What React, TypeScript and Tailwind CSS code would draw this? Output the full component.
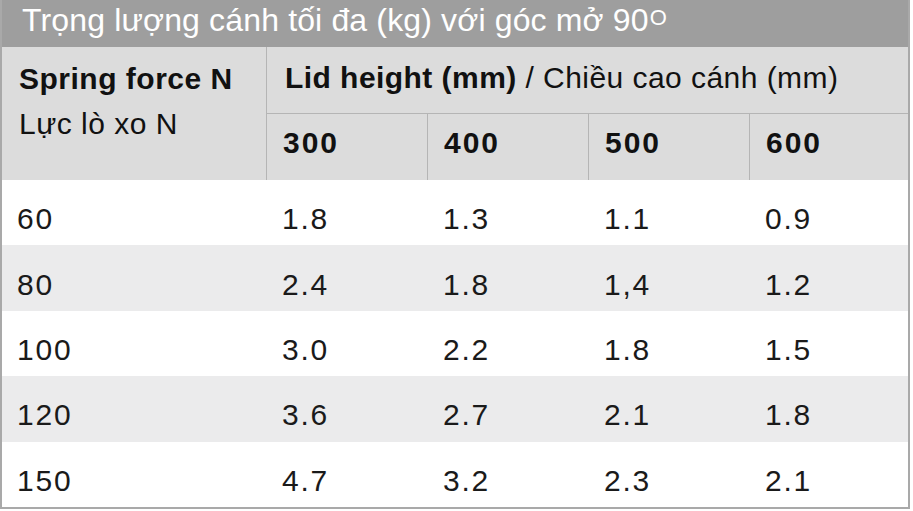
import React from "react";

const rows = [
  ["60", "1.8", "1.3", "1.1", "0.9"],
  ["80", "2.4", "1.8", "1,4", "1.2"],
  ["100", "3.0", "2.2", "1.8", "1.5"],
  ["120", "3.6", "2.7", "2.1", "1.8"],
  ["150", "4.7", "3.2", "2.3", "2.1"],
];

export default function App() {
  return (
    <div
      className="w-[913px] h-[511px] bg-white overflow-hidden"
      style={{ fontFamily: '"Liberation Sans", Arial, sans-serif' }}
    >
      <div className="w-[910px] border-x-2 border-b-2 border-[#a9a9a9]">
        <div className="h-[47px] bg-[#9e9e9e] text-white text-[32px] tracking-[0.15px] pl-[20px] leading-[41px] whitespace-nowrap">
          Trọng lượng cánh tối đa (kg) với góc mở 90
          <span className="inline-block align-top text-[22px] leading-[22px] mt-[7px] ml-[1px] tracking-normal">O</span>
        </div>
        <div className="grid grid-cols-[264px_161px_161px_161px_1fr] grid-rows-[66px_67px] bg-[#dcdcdc] text-[#111]">
          <div className="row-span-2 pl-[17px] pt-[9px] text-[30px] tracking-[0.5px]">
            <div className="font-bold leading-[45px]">Spring force N</div>
            <div className="leading-[45px]">Lực lò xo N</div>
          </div>
          <div className="col-span-4 border-l border-[#b5b5b5] flex items-center pl-[18px] pb-[6px] text-[30px] tracking-[0.45px] whitespace-nowrap">
            <span className="font-bold">Lid height (mm)</span>
            <span>&nbsp;/ Chiều cao cánh (mm)</span>
          </div>
          {["300", "400", "500", "600"].map((h) => (
            <div
              key={h}
              className="border-l border-t border-[#b5b5b5] flex items-center pl-[16px] pb-[9px] text-[30px] font-bold tracking-[2px]"
            >
              {h}
            </div>
          ))}
        </div>
        {rows.map((r, i) => (
          <div
            key={r[0]}
            className={`grid grid-cols-[264px_161px_161px_161px_1fr] h-[65.4px] items-center pt-[12px] text-[30px] text-[#1a1a1a] tracking-[1.8px] ${
              i % 2 === 1 ? "bg-[#ebebec]" : "bg-white"
            }`}
          >
            <div className="pl-[15px]">{r[0]}</div>
            {r.slice(1).map((v, j) => (
              <div key={j} className="pl-[16px]">
                {v}
              </div>
            ))}
          </div>
        ))}
      </div>
    </div>
  );
}
